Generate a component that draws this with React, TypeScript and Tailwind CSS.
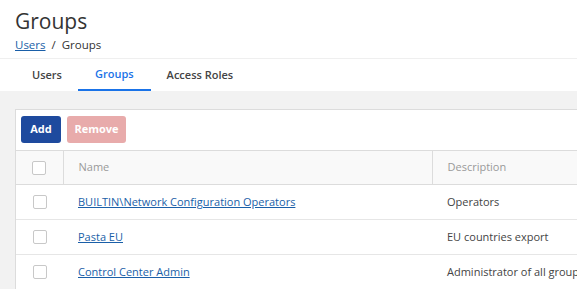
import React from "react";

const rows = [
  {name: "BUILTIN\\Network Configuration Operators", desc: "Operators"},
  {name: "Pasta EU", desc: "EU countries export"},
  {name: "Control Center Admin", desc: "Administrator of all groups"},
];

const Box = () => <span className="block w-[14px] h-[14px] border border-[#c8c8c8] rounded-[2px] bg-white" />;

export default function App() {
  return (
    <div className="w-[577px] h-[289px] overflow-hidden bg-[#f2f2f2] text-[#333] font-['Open_Sans',sans-serif]">
      <div className="bg-white">
        <div className="px-[15px] pt-[6px] h-[59px] border-b border-[#efefef]">
          <h1 className="text-[21px] leading-[30px] text-[#333]">Groups</h1>
          <div className="text-[11.5px] leading-[16px] mt-[1px]">
            <a href="#" className="underline text-[#1a5fa8]">Users</a>
            <span className="mx-[6px]">/</span>
            <span>Groups</span>
          </div>
        </div>
        <div className="flex h-[32px] text-[11px] font-semibold pl-[16px]">
          <div className="px-[16px] flex items-center text-[#444]">Users</div>
          <div className="px-[17px] flex items-center text-[#1a73e8] border-b-2 border-[#1a73e8]">Groups</div>
          <div className="px-[16px] flex items-center text-[#444]">Access Roles</div>
        </div>
      </div>
      <div className="pl-[15px] pt-[18px]">
        <div className="bg-white border border-[#dcdcdc] border-r-0">
          <div className="flex gap-[6px] px-[5px] py-[6px] h-[40px]">
            <button className="h-[27px] w-[40px] rounded-[3px] bg-[#1e4a9e] text-white text-[11px] font-bold">Add</button>
            <button className="h-[27px] w-[59px] rounded-[3px] bg-[#e8abab] text-white text-[11px] font-bold">Remove</button>
          </div>
          <table className="w-[700px] table-fixed border-collapse text-[11px]">
            <colgroup>
              <col className="w-[47px]" />
              <col className="w-[369px]" />
              <col />
            </colgroup>
            <thead>
              <tr className="h-[34px] bg-[#f9f9f9] border-t border-b border-[#dcdcdc] text-[#999]">
                <th className="border-r border-[#dcdcdc] font-normal"><div className="flex justify-center"><Box /></div></th>
                <th className="border-r border-[#dcdcdc] text-left font-normal pl-[15px]">Name</th>
                <th className="text-left font-normal pl-[15px]">Description</th>
              </tr>
            </thead>
            <tbody>
              {rows.map((r) => (
                <tr key={r.name} className="h-[35px] border-b border-[#e6e6e6]">
                  <td><div className="flex justify-center"><Box /></div></td>
                  <td className="pl-[15px] whitespace-nowrap"><a href="#" className="underline text-[#1a5fa8]">{r.name}</a></td>
                  <td className="pl-[15px] whitespace-nowrap text-[#444]">{r.desc}</td>
                </tr>
              ))}
            </tbody>
          </table>
        </div>
      </div>
    </div>
  );
}
